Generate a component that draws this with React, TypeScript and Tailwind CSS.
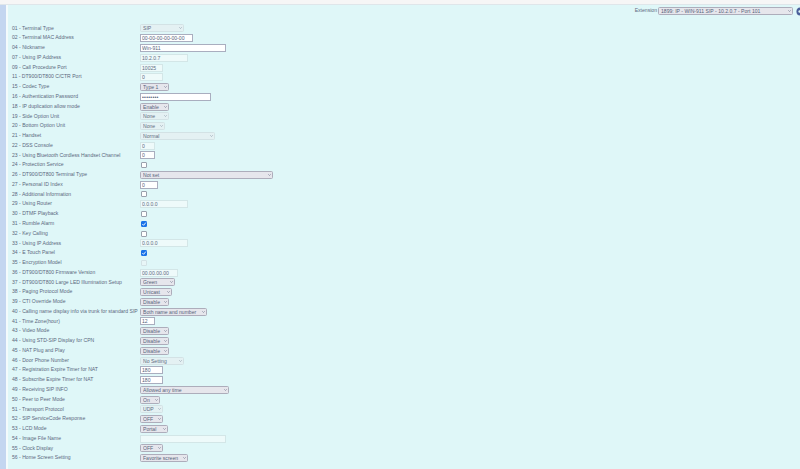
import { useState } from "react";

type Row =
    | { label: string; kind: "select"; value: string; w: string; disabled?: boolean }
    | { label: string; kind: "input"; value: string; w: string; disabled?: boolean; password?: boolean }
    | { label: string; kind: "check"; checked?: boolean; disabled?: boolean };

const rows: Row[] = [
    { label: "01 - Terminal Type", kind: "select", value: "SIP", w: "w-[43.5px]", disabled: true },
    { label: "02 - Terminal MAC Address", kind: "input", value: "00-00-00-00-00-00", w: "w-[53px]" },
    { label: "04 - Nickname", kind: "input", value: "Win-911", w: "w-[86px]" },
    { label: "07 - Using IP Address", kind: "input", value: "10.2.0.7", w: "w-[48px]", disabled: true },
    { label: "09 - Call Procedure Port", kind: "input", value: "10025", w: "w-[23px]", disabled: true },
    { label: "11 - DT900/DT800 C/CTR Port", kind: "input", value: "0", w: "w-[23px]", disabled: true },
    { label: "15 - Codec Type", kind: "select", value: "Type 1", w: "w-[28.5px]" },
    { label: "16 - Authentication Password", kind: "input", value: "••••••••", w: "w-[71px]", password: true },
    { label: "18 - IP duplication allow mode", kind: "select", value: "Enable", w: "w-[29px]" },
    { label: "19 - Side Option Unit", kind: "select", value: "None", w: "w-[29px]", disabled: true },
    { label: "20 - Bottom Option Unit", kind: "select", value: "None", w: "w-[25px]", disabled: true },
    { label: "21 - Handset", kind: "select", value: "Normal", w: "w-[75px]", disabled: true },
    { label: "22 - DSS Console", kind: "input", value: "0", w: "w-[15px]", disabled: true },
    { label: "23 - Using Bluetooth Cordless Handset Channel", kind: "input", value: "0", w: "w-[15px]" },
    { label: "24 - Protection Service", kind: "check" },
    { label: "26 - DT900/DT800 Terminal Type", kind: "select", value: "Not set", w: "w-[132.5px]" },
    { label: "27 - Personal ID Index", kind: "input", value: "0", w: "w-[18px]" },
    { label: "28 - Additional Information", kind: "check" },
    { label: "29 - Using Router", kind: "input", value: "0.0.0.0", w: "w-[48px]", disabled: true },
    { label: "30 - DTMF Playback", kind: "check" },
    { label: "31 - Rumble Alarm", kind: "check", checked: true },
    { label: "32 - Key Calling", kind: "check" },
    { label: "33 - Using IP Address", kind: "input", value: "0.0.0.0", w: "w-[48px]", disabled: true },
    { label: "34 - E Touch Panel", kind: "check", checked: true },
    { label: "35 - Encryption Model", kind: "check", disabled: true },
    { label: "36 - DT900/DT800 Firmware Version", kind: "input", value: "00.00.00.00", w: "w-[38px]", disabled: true },
    { label: "37 - DT900/DT800 Large LED Illumination Setup", kind: "select", value: "Green", w: "w-[35px]" },
    { label: "38 - Paging Protocol Mode", kind: "select", value: "Unicast", w: "w-[32px]" },
    { label: "39 - CTI Override Mode", kind: "select", value: "Disable", w: "w-[29px]" },
    { label: "40 - Calling name display info via trunk for standard SIP", kind: "select", value: "Both name and number", w: "w-[66.5px]" },
    { label: "41 - Time Zone(hour)", kind: "input", value: "12", w: "w-[15px]" },
    { label: "43 - Video Mode", kind: "select", value: "Disable", w: "w-[29px]" },
    { label: "44 - Using STD-SIP Display for CPN", kind: "select", value: "Disable", w: "w-[29px]" },
    { label: "45 - NAT Plug and Play", kind: "select", value: "Disable", w: "w-[29px]" },
    { label: "46 - Door Phone Number", kind: "select", value: "No Setting", w: "w-[43.5px]", disabled: true },
    { label: "47 - Registration Expire Timer for NAT", kind: "input", value: "180", w: "w-[23px]" },
    { label: "48 - Subscribe Expire Timer for NAT", kind: "input", value: "180", w: "w-[23px]" },
    { label: "49 - Receiving SIP INFO", kind: "select", value: "Allowed any time", w: "w-[89px]" },
    { label: "50 - Peer to Peer Mode", kind: "select", value: "On", w: "w-[20px]" },
    { label: "51 - Transport Protocol", kind: "select", value: "UDP", w: "w-[23px]", disabled: true },
    { label: "52 - SIP ServiceCode Response", kind: "select", value: "OFF", w: "w-[23px]" },
    { label: "53 - LCD Mode", kind: "select", value: "Portal", w: "w-[28px]" },
    { label: "54 - Image File Name", kind: "input", value: "", w: "w-[86px]", disabled: true },
    { label: "55 - Clock Display", kind: "select", value: "OFF", w: "w-[23px]" },
    { label: "56 - Home Screen Setting", kind: "select", value: "Favorite screen", w: "w-[48px]" },
];

function SmallSelect({ value, w, disabled }: { value: string; w: string; disabled?: boolean }) {
    return (
        <span className={`relative flex ${w}`}>
            <select
                disabled={disabled}
                defaultValue={value}
                className={`h-[8px] w-full appearance-none rounded-[1.5px] border-[0.75px] pl-[2px] text-[5.1px] leading-[6px] ${
                    disabled
                        ? "border-[#d3e2e5] bg-[#e4f1f3] text-[#5f6d82] opacity-100"
                        : "border-[#adadbb] bg-[#e6e6ec] text-[#55637a]"
                }`}
            >
                <option>{value}</option>
            </select>
            <svg viewBox="0 0 6 4" className="pointer-events-none absolute top-[3px] right-[2px] h-[2px] w-[3px]">
                <path d="M0.5 0.5 L3 3 L5.5 0.5" fill="none" stroke={disabled ? "#7d8a9c" : "#55637a"} strokeWidth="1" />
            </svg>
        </span>
    );
}

function SmallInput({ value, w, disabled, password }: { value: string; w: string; disabled?: boolean; password?: boolean }) {
    const [text, setText] = useState(value);
    return (
        <input
            disabled={disabled}
            value={text}
            onChange={(e) => setText(e.target.value)}
            className={`${w} h-[8px] border-[0.75px] px-[1px] text-[5.1px] ${
                disabled ? "border-[#d3e6e7] bg-[#eefafa] text-[#5f6d82]" : "border-[#a9aebf] bg-white text-[#55637a]"
            } ${password ? "font-bold tracking-[0.3px] text-[#3b4a78]" : ""}`}
        />
    );
}

function SmallCheck({ checked, disabled }: { checked?: boolean; disabled?: boolean }) {
    return (
        <span className="relative ml-[0.5px] flex h-[6px] w-[6px]">
            <input
                type="checkbox"
                disabled={disabled}
                defaultChecked={checked}
                className={`peer h-[6px] w-[6px] appearance-none rounded-[1px] border-[0.75px] checked:border-[#1a73e8] checked:bg-[#1a73e8] ${
                    disabled ? "border-[#d3e2e5] bg-[#e8f6f7]" : "border-[#9aa1ad] bg-white"
                }`}
            />
            <svg viewBox="0 0 6 6" className="pointer-events-none absolute inset-0 hidden h-[6px] w-[6px] peer-checked:block">
                <path d="M1.3 3 L2.6 4.3 L4.8 1.6" fill="none" stroke="#fff" strokeWidth="0.9" />
            </svg>
        </span>
    );
}

export default function App() {
    return (
        <div className="flex h-[469px] w-[800px] flex-col overflow-hidden bg-white font-['Liberation_Sans',sans-serif] text-[#5b687e]">
            <div className="h-[5px] shrink-0 border-b border-[#dfe6ea] bg-[#f6f6f6]" />
            <div className="flex min-h-0 flex-1">
                <div className="w-[6px] shrink-0 bg-[#c4d6f0]" />
                <div className="w-[1.5px] shrink-0 bg-[#f4fbfc]" />
                <main className="min-w-0 flex-1 overflow-hidden bg-[#dff7f8]">
                    <div className="flex h-[10px] items-center justify-end gap-[1px] pt-[2px]">
                        <span className="text-[5.1px] leading-none">Extension</span>
                        <span className="relative flex w-[135px]">
                            <select className="h-[8px] w-full appearance-none rounded-[1.5px] border-[0.75px] border-[#adadbb] bg-[#e6e6ec] pl-[2px] text-[5.1px] text-[#55637a]">
                                <option>1899: IP - WIN-911 SIP - 10.2.0.7 - Port 101</option>
                            </select>
                            <svg viewBox="0 0 6 4" className="pointer-events-none absolute top-[3px] right-[2px] h-[2px] w-[3px]">
                                <path d="M0.5 0.5 L3 3 L5.5 0.5" fill="none" stroke="#55637a" strokeWidth="1" />
                            </svg>
                        </span>
                        <svg viewBox="0 0 10 10" className="ml-[2px] -mr-[5px] h-[9px] w-[9px] shrink-0">
                            <circle cx="5" cy="5" r="4.5" fill="#4a5f9a" />
                            <circle cx="4" cy="5" r="1.3" fill="#dff7f8" />
                        </svg>
                    </div>
                    <div className="mt-[8.6px] flex flex-col pl-[4.5px]">
                        {rows.map((row) => (
                            <div key={row.label} className="flex h-[9.77px] items-center">
                                <label className="w-[128px] shrink-0 whitespace-nowrap text-[5.1px]">{row.label}</label>
                                {row.kind === "select" && <SmallSelect value={row.value} w={row.w} disabled={row.disabled} />}
                                {row.kind === "input" && (
                                    <SmallInput value={row.value} w={row.w} disabled={row.disabled} password={row.password} />
                                )}
                                {row.kind === "check" && <SmallCheck checked={row.checked} disabled={row.disabled} />}
                            </div>
                        ))}
                    </div>
                </main>
            </div>
        </div>
    );
}
